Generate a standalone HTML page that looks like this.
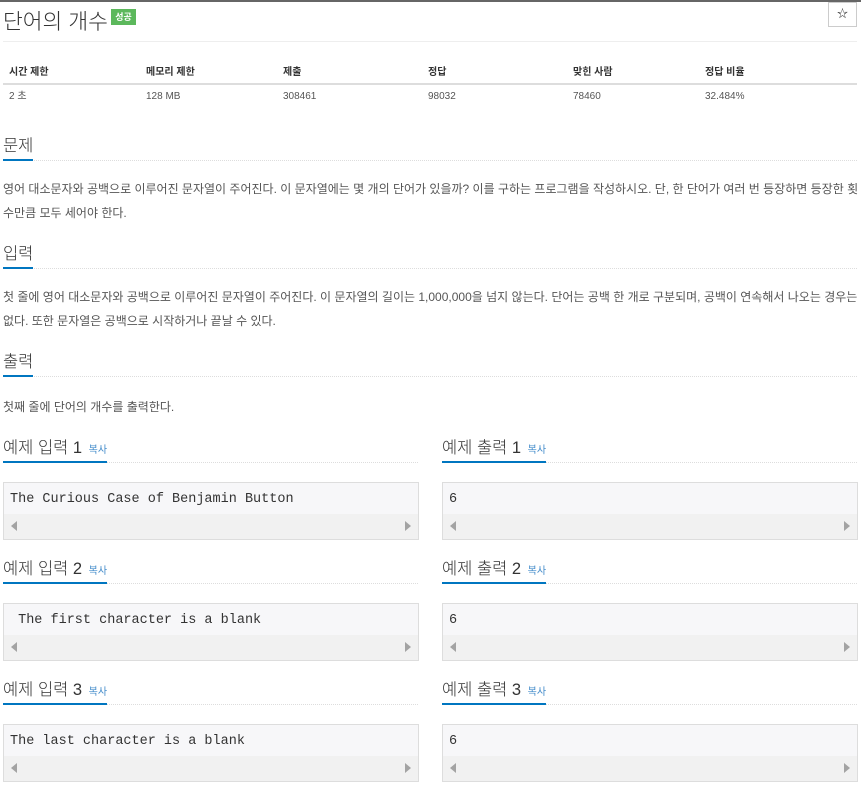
<!DOCTYPE html>
<html><head><meta charset="utf-8"><style>
*{margin:0;padding:0;box-sizing:border-box}
body{width:861px;height:798px;background:#fff;position:relative;overflow:hidden;font-family:"Liberation Sans","Noto Sans CJK KR",sans-serif;color:#555}
.a{position:absolute;white-space:nowrap}
.topline{position:absolute;left:0;top:0;width:861px;height:2px;background:#666}
.title{left:3px;top:5px;font-size:21.5px;color:#333;font-weight:300}
.badge{position:absolute;left:111px;top:9px;width:25px;height:16px;background:#5cb85c;color:#fff;font-size:9px;font-weight:bold;text-align:center;line-height:16px}
.star{position:absolute;left:828px;top:2px;width:29px;height:25px;border:1px solid #ccc;text-align:center;line-height:23px;font-size:11px;color:#333}
.hr{position:absolute;left:3px;width:854px;height:1px;background:#eee}
.th{font-size:10px;font-weight:bold;color:#333;top:63px}
.td{font-size:10px;color:#555;top:90px;line-height:14px}
.h{font-size:16.5px;color:#333;font-weight:300}
.ul{position:absolute;height:1px;border-top:1px dotted #ddd}
.ulb{position:absolute;height:2px;background:#0076c0}
.p{font-size:12px;color:#555;left:3px}
.copy{font-size:10px;color:#428bca;font-weight:normal;margin-left:2px}
.box{position:absolute;width:416px;height:58px;border:1px solid #ddd;background:#f7f7f9}
.box .t{position:absolute;left:6px;top:9px;font-family:"Liberation Mono","DejaVu Sans Mono",monospace;font-size:13.5px;color:#333;white-space:pre}
.box .sb{position:absolute;left:0;right:0;bottom:0;height:25px;background:#f1f1f1}
.l{position:absolute;left:7px;top:7px;width:0;height:0;border-top:5px solid transparent;border-bottom:5px solid transparent;border-right:6px solid #a3a3a3}
.r{position:absolute;right:7px;top:7px;width:0;height:0;border-top:5px solid transparent;border-bottom:5px solid transparent;border-left:6px solid #a3a3a3}
</style></head><body>
<div class="topline"></div>
<div class="a title">단어의 개수</div>
<div class="badge">성공</div>
<div class="star">☆</div>
<div class="hr" style="top:41px"></div>
<div class="a th" style="left:9px">시간 제한</div>
<div class="a th" style="left:146px">메모리 제한</div>
<div class="a th" style="left:283px">제출</div>
<div class="a th" style="left:428px">정답</div>
<div class="a th" style="left:573px">맞힌 사람</div>
<div class="a th" style="left:705px">정답 비율</div>
<div class="hr" style="top:83px;height:2px;background:#ddd"></div>
<div class="a td" style="left:9px">2 초</div>
<div class="a td" style="left:146px">128 MB</div>
<div class="a td" style="left:283px">308461</div>
<div class="a td" style="left:428px">98032</div>
<div class="a td" style="left:573px">78460</div>
<div class="a td" style="left:705px">32.484%</div>

<div class="a h" style="left:3px;top:132px">문제</div>
<div class="ul" style="left:3px;top:160px;width:854px"></div><div class="ulb" style="left:3px;top:159px;width:30px"></div>
<div class="a p" style="top:180px">영어 대소문자와 공백으로 이루어진 문자열이 주어진다. 이 문자열에는 몇 개의 단어가 있을까? 이를 구하는 프로그램을 작성하시오. 단, 한 단어가 여러 번 등장하면 등장한 횟</div>
<div class="a p" style="top:204px">수만큼 모두 세어야 한다.</div>

<div class="a h" style="left:3px;top:240px">입력</div>
<div class="ul" style="left:3px;top:268px;width:854px"></div><div class="ulb" style="left:3px;top:267px;width:30px"></div>
<div class="a p" style="top:288px">첫 줄에 영어 대소문자와 공백으로 이루어진 문자열이 주어진다. 이 문자열의 길이는 1,000,000을 넘지 않는다. 단어는 공백 한 개로 구분되며, 공백이 연속해서 나오는 경우는</div>
<div class="a p" style="top:312px">없다. 또한 문자열은 공백으로 시작하거나 끝날 수 있다.</div>

<div class="a h" style="left:3px;top:348px">출력</div>
<div class="ul" style="left:3px;top:376px;width:854px"></div><div class="ulb" style="left:3px;top:375px;width:30px"></div>
<div class="a p" style="top:398px">첫째 줄에 단어의 개수를 출력한다.</div>

<div class="a h" style="left:3px;top:434px">예제 입력 1 <span class="copy">복사</span></div>
<div class="ul" style="left:3px;top:462px;width:415px"></div><div class="ulb" style="left:3px;top:461px;width:104px"></div>
<div class="box" style="left:3px;top:482px"><div class="t">The Curious Case of Benjamin Button</div><div class="sb"><div class="l"></div><div class="r"></div></div></div>
<div class="a h" style="left:442px;top:434px">예제 출력 1 <span class="copy">복사</span></div>
<div class="ul" style="left:442px;top:462px;width:415px"></div><div class="ulb" style="left:442px;top:461px;width:104px"></div>
<div class="box" style="left:442px;top:482px"><div class="t">6</div><div class="sb"><div class="l"></div><div class="r"></div></div></div>

<div class="a h" style="left:3px;top:555px">예제 입력 2 <span class="copy">복사</span></div>
<div class="ul" style="left:3px;top:583px;width:415px"></div><div class="ulb" style="left:3px;top:582px;width:104px"></div>
<div class="box" style="left:3px;top:603px"><div class="t"> The first character is a blank</div><div class="sb"><div class="l"></div><div class="r"></div></div></div>
<div class="a h" style="left:442px;top:555px">예제 출력 2 <span class="copy">복사</span></div>
<div class="ul" style="left:442px;top:583px;width:415px"></div><div class="ulb" style="left:442px;top:582px;width:104px"></div>
<div class="box" style="left:442px;top:603px"><div class="t">6</div><div class="sb"><div class="l"></div><div class="r"></div></div></div>

<div class="a h" style="left:3px;top:676px">예제 입력 3 <span class="copy">복사</span></div>
<div class="ul" style="left:3px;top:704px;width:415px"></div><div class="ulb" style="left:3px;top:703px;width:104px"></div>
<div class="box" style="left:3px;top:724px"><div class="t">The last character is a blank </div><div class="sb"><div class="l"></div><div class="r"></div></div></div>
<div class="a h" style="left:442px;top:676px">예제 출력 3 <span class="copy">복사</span></div>
<div class="ul" style="left:442px;top:704px;width:415px"></div><div class="ulb" style="left:442px;top:703px;width:104px"></div>
<div class="box" style="left:442px;top:724px"><div class="t">6</div><div class="sb"><div class="l"></div><div class="r"></div></div></div>
</body></html>
